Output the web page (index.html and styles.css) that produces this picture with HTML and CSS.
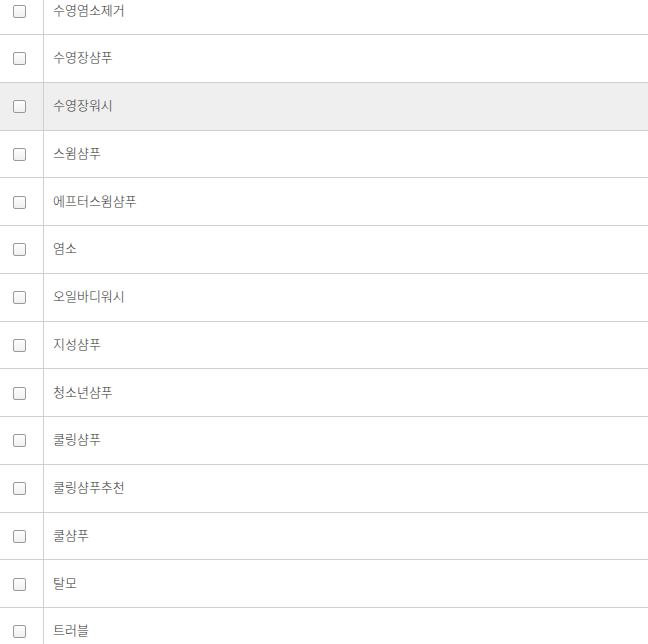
FILE: index.html
```html
<!DOCTYPE html>
<html lang="ko">
<head>
<meta charset="utf-8">
<link rel="stylesheet" href="styles.css">
</head>
<body>
<div class="list">
  <div class="row"><div class="chk"><span class="box"></span></div><div class="label">수영염소제거</div></div>
  <div class="row"><div class="chk"><span class="box"></span></div><div class="label">수영장샴푸</div></div>
  <div class="row hover"><div class="chk"><span class="box"></span></div><div class="label">수영장워시</div></div>
  <div class="row"><div class="chk"><span class="box"></span></div><div class="label">스윔샴푸</div></div>
  <div class="row"><div class="chk"><span class="box"></span></div><div class="label">에프터스윔샴푸</div></div>
  <div class="row"><div class="chk"><span class="box"></span></div><div class="label">염소</div></div>
  <div class="row"><div class="chk"><span class="box"></span></div><div class="label">오일바디워시</div></div>
  <div class="row"><div class="chk"><span class="box"></span></div><div class="label">지성샴푸</div></div>
  <div class="row"><div class="chk"><span class="box"></span></div><div class="label">청소년샴푸</div></div>
  <div class="row"><div class="chk"><span class="box"></span></div><div class="label">쿨링샴푸</div></div>
  <div class="row"><div class="chk"><span class="box"></span></div><div class="label">쿨링샴푸추천</div></div>
  <div class="row"><div class="chk"><span class="box"></span></div><div class="label">쿨샴푸</div></div>
  <div class="row"><div class="chk"><span class="box"></span></div><div class="label">탈모</div></div>
  <div class="row"><div class="chk"><span class="box"></span></div><div class="label">트러블</div></div>
</div>
</body>
</html>
```
FILE: styles.css
```css
html, body {
  margin: 0;
  padding: 0;
  background: #fff;
  overflow: hidden;
}
body {
  font-family: "Noto Sans CJK KR", "Noto Sans", sans-serif;
  font-size: 13px;
  font-weight: 300;
  color: #333;
}
.list {
  margin-top: -12.75px;
}
.row {
  display: flex;
  height: 47.75px;
  box-sizing: border-box;
  border-bottom: 1px solid #cfcfcf;
  background: #fff;
}
.row.hover {
  background: #efefef;
}
.chk {
  width: 44px;
  flex: none;
  border-right: 1px solid #cfcfcf;
  display: flex;
  align-items: center;
  padding-left: 13px;
  padding-top: 1px;
  box-sizing: border-box;
}
.box {
  width: 13px;
  height: 13px;
  box-sizing: border-box;
  border: 1px solid #9a9a9a;
  border-radius: 2px;
  background: linear-gradient(#fdfdfd, #f0f0f0);
}
.label {
  display: flex;
  align-items: center;
  padding-left: 9px;
  padding-bottom: 3px;
  line-height: 1;
}
```
